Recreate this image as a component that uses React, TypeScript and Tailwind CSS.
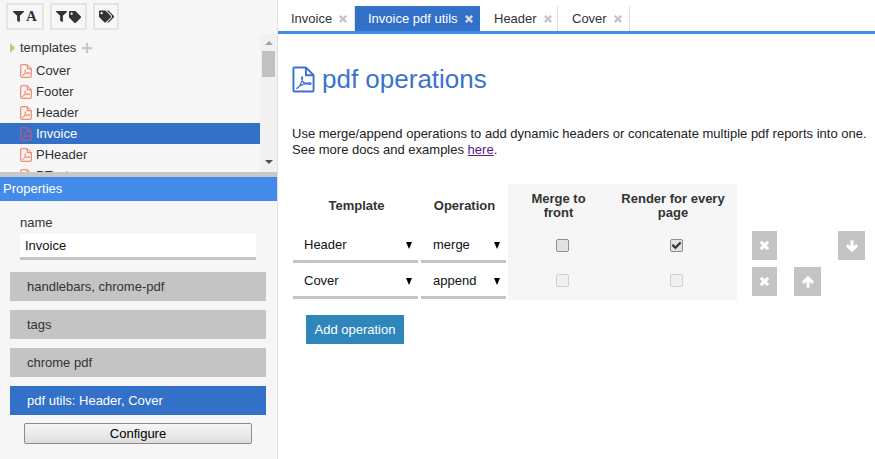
import React from 'react';
import { FaFilter, FaTag, FaTags, FaPlus, FaTimes, FaArrowDown, FaArrowUp, FaCheck } from 'react-icons/fa';

const PdfIcon = ({ className }: { className: string }) => (
  <svg viewBox="0 0 24 28" className={className} fill="none" stroke="currentColor">
    <path d="M1.5 2.5a1 1 0 0 1 1-1h12l8 8v16a1 1 0 0 1-1 1h-19a1 1 0 0 1-1-1z" strokeWidth="2" />
    <path d="M14.5 1.5v8h8" strokeWidth="2" />
    <path d="M4.5 23.5c3-1.5 5.5-6 6.5-11 .3-1.6-1-1.6-1 0 0 3.5 3 6.500 8.500 6.500 2 0 2-1.500 0-1.500-4 0-9 2-12.500 5z" strokeWidth="1.300" />
  </svg>
);

const templates = ['Cover', 'Footer', 'Header', 'Invoice', 'PHeader', 'PTest'];
const sections = ['handlebars, chrome-pdf', 'tags', 'chrome pdf', 'pdf utils: Header, Cover'];
const tabs = [
  { name: 'Invoice', w: 'w-[77px]', pl: 'pl-[13px]' },
  { name: 'Invoice pdf utils', w: 'w-[125px]', pl: 'pl-[13px]', active: true },
  { name: 'Header', w: 'w-[78px]', pl: 'pl-[14px]' },
  { name: 'Cover', w: 'w-[72px]', pl: 'pl-[14px]' },
];
const rows = [
  { template: 'Header', op: 'merge', render: true, disabled: false },
  { template: 'Cover', op: 'append', render: false, disabled: true },
];

const Check = ({ checked, disabled }: { checked?: boolean; disabled?: boolean }) => (
  <span className={`w-[13px] h-[13px] rounded-[2px] border flex items-center justify-center ${disabled ? 'border-[#d0d0d0] bg-[#efefef]' : 'border-[#8f8f8f] bg-[#e2e2e2]'}`}>
    {checked && <FaCheck className="text-[#333] text-[9px] stroke-[40]" />}
  </span>
);

const SelectBox = ({ value, w, pl }: { value: string; w: string; pl: string }) => (
  <div className={`${w} ${pl} h-[34px] border-b-[3px] border-[#c4c4c4] flex items-center justify-between pr-[6px] text-[#111]`}>
    <span>{value}</span>
    <span className="w-0 h-0 border-x-[3.500px] border-x-transparent border-t-[7px] border-t-black mt-[1px]" />
  </div>
);

export default function App() {
  return (
    <div className="flex w-full h-screen overflow-hidden bg-white text-[13px] text-[#333] font-['Liberation_Sans',Arial,sans-serif]">
      {/* left pane */}
      <div className="w-[278px] shrink-0 flex flex-col bg-[#f6f6f6] border-r border-[#e0e0e0]">
        <div className="h-[34px] shrink-0 flex gap-[6px] pl-[6px] pt-[3px]">
          <button className="w-[38px] h-[27px] border-2 border-[#e4e4e4] flex items-center justify-center gap-[2px] text-[#333]">
            <FaFilter className="text-[11px]" />
            <span className="font-['Liberation_Serif',serif] font-bold text-[15px] leading-none">A</span>
          </button>
          <button className="w-[37px] h-[27px] border-2 border-[#e4e4e4] flex items-center justify-center gap-[2px] text-[#333]">
            <FaFilter className="text-[11px]" /><FaTag className="text-[12px]" />
          </button>
          <button className="w-[26px] h-[27px] border-2 border-[#e4e4e4] flex items-center justify-center text-[#333]">
            <FaTags className="text-[15px]" />
          </button>
        </div>
        <div className="h-[138px] shrink-0 flex overflow-hidden">
          <div className="w-[260px] overflow-hidden">
            <div className="h-[27px] flex items-center pl-[10px] pt-[1px]">
              <span className="w-0 h-0 border-y-[5px] border-y-transparent border-l-[5px] border-l-[#c8c46a]" />
              <span className="ml-[5px]">templates</span>
              <FaPlus className="ml-[5px] text-[12px] text-[#c4c8cc]" />
            </div>
            {templates.map((t, i) => (
              <div key={t} className={`${i === 0 ? 'h-[20px]' : 'h-[21px]'} flex items-center pl-[20px] ${t === 'Invoice' ? 'bg-[#3370c8] text-white' : ''}`}>
                <PdfIcon className={`w-[12px] h-[14px] shrink-0 ${t === 'Invoice' ? 'text-[#d05a70]' : 'text-[#ee7050]'}`} />
                <span className="ml-[4px]">{t}</span>
              </div>
            ))}
          </div>
          <div className="w-[17px] flex flex-col items-center bg-[#f1f1f1]">
            <span className="mt-[7px] w-0 h-0 border-x-[4px] border-x-transparent border-b-[4px] border-b-[#a3a3a3]" />
            <div className="mt-[6px] w-[13px] h-[26px] bg-[#c1c1c1]" />
            <span className="mt-auto mb-[8px] w-0 h-0 border-x-[4px] border-x-transparent border-t-[4px] border-t-[#505050]" />
          </div>
        </div>
        <div className="h-[5px] shrink-0 bg-[#c8c8c8]" />
        <div className="h-[24px] shrink-0 bg-[#438be8] text-white flex items-center pl-[3px]">Properties</div>
        <div className="flex flex-col pl-[10px] pr-[11px]">
          <div className="mt-[13px] pl-[10px] h-[17px] leading-[17px]">name</div>
          <div className="mt-[3px] mx-[10px] h-[26px] bg-white border-b-[3px] border-[#c4c4c4] pl-[5px] leading-[23px] text-[#111]">Invoice</div>
          <div className="mt-[12px] flex flex-col gap-[9px]">
            {sections.map((s, i) => (
              <div key={s} className={`h-[29px] flex items-center pl-[17px] ${i === 3 ? 'bg-[#3370c8] text-white' : 'bg-[#c4c4c4] text-[#333]'}`}>{s}</div>
            ))}
          </div>
          <button className="mt-[8px] mx-[14px] h-[21px] rounded-[2px] border border-[#8a8a8a] bg-gradient-to-b from-[#f6f6f6] to-[#dedede] text-black leading-[19px]">Configure</button>
        </div>
      </div>

      {/* main pane */}
      <div className="flex-1 min-w-0 flex flex-col">
        <div className="h-[34px] shrink-0 pt-[6px] flex border-b-[3px] border-[#438be8]">
          {tabs.map((t) => (
            <div key={t.name} className={`${t.w} ${t.pl} h-[25px] flex items-center gap-[6px] whitespace-nowrap ${t.active ? 'bg-[#3370c8] text-white' : 'border-r border-[#e0e0e0] text-[#333]'}`}>
              <span>{t.name}</span>
              <FaTimes className={`text-[10px] stroke-[40] ${t.active ? 'text-[#dcdcdc]' : 'text-[#c4c4c4]'}`} />
            </div>
          ))}
        </div>
        <div className="pl-[14px]">
          <div className="mt-[30px] h-[30px] flex items-center">
            <PdfIcon className="w-[23px] h-[27px] text-[#3b72cf]" />
            <h1 className="ml-[7px] text-[26px] text-[#3b72cf]">pdf operations</h1>
          </div>
          <p className="mt-[32px] leading-[16px] text-[#222] whitespace-nowrap">
            Use merge/append operations to add dynamic headers or concatenate multiple pdf reports into one.<br />
            See more docs and examples <a className="underline text-[#551a8b]">here</a>.
          </p>
          <div className="mt-[26px] ml-[1px] flex">
            <div className="flex flex-col">
              <div className="flex h-[45px] pb-[2px] font-bold text-center items-center">
                <div className="w-[127px]">Template</div>
                <div className="w-[1px]" />
                <div className="w-[87px]">Operation</div>
              </div>
              {rows.map((r) => (
                <div key={r.template} className="flex gap-[3px] h-[36px]">
                  <SelectBox value={r.template} w="w-[125px]" pl="pl-[11px]" />
                  <SelectBox value={r.op} w="w-[85px]" pl="pl-[12px]" />
                </div>
              ))}
            </div>
            <div className="w-[229px] h-[116px] bg-[#f6f6f6] flex flex-col">
              <div className="flex h-[45px] font-bold text-center items-center leading-[14px]">
                <div className="w-[101px] px-[15px]">Merge to front</div>
                <div className="w-[128px] px-[10px]">Render for every page</div>
              </div>
              {rows.map((r) => (
                <div key={r.template} className="flex h-[36px] items-start pt-[10px]">
                  <div className="w-[108px] flex justify-center"><Check disabled={r.disabled} /></div>
                  <div className="w-[121px] flex justify-center"><Check checked={r.render} disabled={r.disabled} /></div>
                </div>
              ))}
            </div>
            <div className="ml-[15px] flex flex-col pt-[47px] gap-[7px]">
              <div className="flex h-[29px]">
                <div className="w-[25px] bg-[#c4c4c4] text-white flex items-center justify-center"><FaTimes className="text-[11px] stroke-[50]" /></div>
                <div className="ml-[61px] w-[27px] bg-[#c4c4c4] text-white flex items-center justify-center"><FaArrowDown className="text-[12px] stroke-[50]" /></div>
              </div>
              <div className="flex h-[29px]">
                <div className="w-[25px] bg-[#c4c4c4] text-white flex items-center justify-center"><FaTimes className="text-[11px] stroke-[50]" /></div>
                <div className="ml-[17px] w-[27px] bg-[#c4c4c4] text-white flex items-center justify-center"><FaArrowUp className="text-[12px] stroke-[50]" /></div>
              </div>
            </div>
          </div>
          <button className="mt-[14px] ml-[14px] w-[98px] h-[29px] bg-[#2f86ba] text-white">Add operation</button>
        </div>
      </div>
    </div>
  );
}
